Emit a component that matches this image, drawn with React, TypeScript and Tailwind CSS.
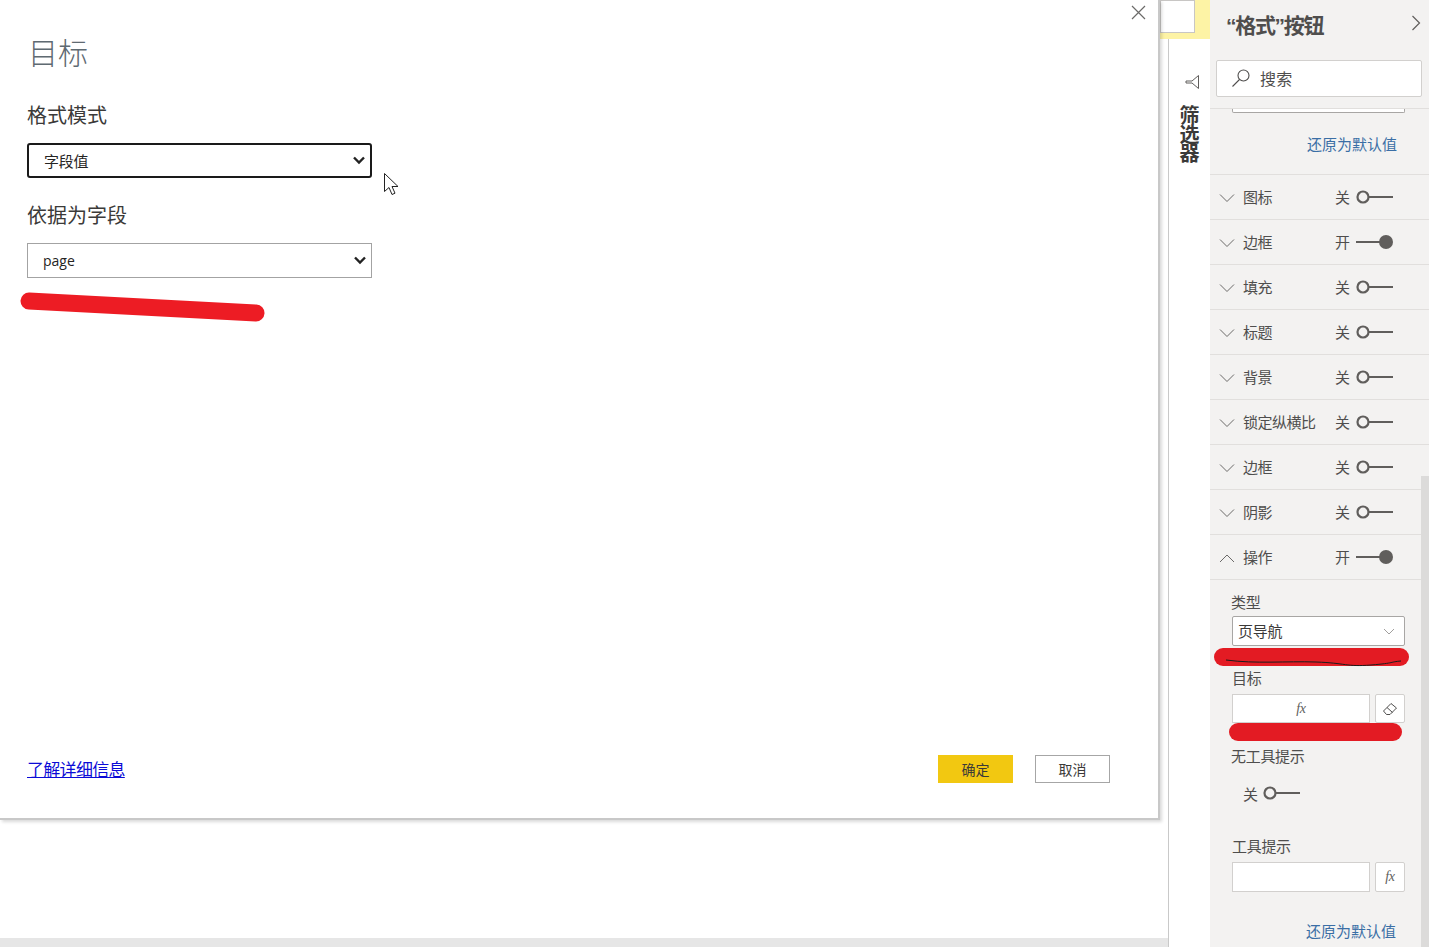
import React from 'react';

const cjk = 'font-["Noto_Sans_CJK_SC","Noto_Sans",sans-serif]';

const Chevron = ({ up = false }: { up?: boolean }) => (
  <svg width="16" height="10" viewBox="0 0 16 10" fill="none" stroke="#6b6a69" strokeWidth="1" className="mt-[1px]">
    <path d={up ? 'M1 9l7-7 7 7' : 'M1 1.5l7 7 7-7'} />
  </svg>
);

const Toggle = ({ on }: { on: boolean }) =>
  on ? (
    <svg width="38" height="16" viewBox="0 0 38 16" fill="none">
      <path d="M0 8h26" stroke="#605e5c" strokeWidth="2" />
      <circle cx="30" cy="8" r="7" fill="#605e5c" />
    </svg>
  ) : (
    <svg width="38" height="16" viewBox="0 0 38 16" fill="none">
      <circle cx="7" cy="8" r="5.5" stroke="#605e5c" strokeWidth="2.2" />
      <path d="M13 8h24" stroke="#605e5c" strokeWidth="2" />
    </svg>
  );

const Row = ({ label, on = false, up = false }: { label: string; on?: boolean; up?: boolean }) => (
  <div className="flex h-[45px] items-center border-b border-[#e1dfdd] pl-[9px]">
    <Chevron up={up} />
    <span className="-mt-[2px] ml-[8px] w-[92px] text-[15px] leading-none tracking-[-0.5px] whitespace-nowrap text-[#4f4e4d]">{label}</span>
    <span className="-mt-[2px] text-[15px] leading-none text-[#4f4e4d]">{on ? '开' : '关'}</span>
    <span className="ml-[6px] flex"><Toggle on={on} /></span>
  </div>
);

const Fx = () => <span className="font-['Liberation_Serif',serif] text-[14px] text-[#605e5c] italic">fx</span>;

const SelectBox = ({ text, focused = false, latin = false }: { text: string; focused?: boolean; latin?: boolean }) => (
  <div
    className={`flex h-[35px] w-[345px] items-center justify-between pr-[4px] pl-[15px] text-[15px] text-[#252423] ${
      focused ? 'rounded-[3px] border-2 border-[#1a1a1a]' : 'border border-[#a3a3a3]'
    }`}
  >
    {latin ? (
      <span className="font-['Open_Sans',sans-serif] text-[14px] leading-none">{text}</span>
    ) : (
      <span className="-mt-[1px] leading-none tracking-[-0.3px]">{text}</span>
    )}
    <svg width="14" height="9" viewBox="0 0 14 9" fill="none" stroke="#222" strokeWidth="2.4">
      <path d="M2 1.5l5 5 5-5" />
    </svg>
  </div>
);

export default function App() {
  return (
    <div className={`flex h-[947px] w-[1429px] overflow-hidden bg-white ${cjk}`}>
      <div className="relative flex w-[1168px] flex-col justify-end">
        <div className="h-[9px] bg-[#e6e6e6]" />

        {/* dialog over the report canvas */}
        <div className="absolute top-0 left-0 flex h-[820px] w-[1160px] flex-col border-r-[2px] border-b-[2px] border-[#c8c8c8] bg-white pl-[27px] shadow-[2px_2px_3px_rgba(0,0,0,0.15)]">
          <svg className="absolute top-[5px] right-[12px]" width="15" height="15" viewBox="0 0 15 15" stroke="#6b6a69" strokeWidth="1.2">
            <path d="M1 1l13 13M14 1L1 14" />
          </svg>
          <h1 className="mt-[30px] ml-[1px] text-[30px] leading-[42px] font-light text-[#5f6a72]">目标</h1>
          <div className="mt-[29px] text-[20px] leading-[28px] text-[#3b3a39]">格式模式</div>
          <div className="mt-[14px]"><SelectBox text="字段值" focused /></div>
          <div className="mt-[23px] text-[20px] leading-[28px] text-[#3b3a39]">依据为字段</div>
          <div className="mt-[14px]">
            <SelectBox text="page" latin />
          </div>
          <svg className="absolute top-[288px] left-[16px]" width="256" height="40" viewBox="0 0 256 40" fill="none">
            <path d="M13 13L240 25" stroke="#ed1c24" strokeWidth="17" strokeLinecap="round" />
          </svg>
          <svg className="absolute top-[172px] left-[383px]" width="18" height="25" viewBox="0 0 18 25" fill="#fff" stroke="#222" strokeWidth="1">
            <path d="M1.5 1.5v18l4.5-4 3 7 3-1.3-3-6.7h6z" />
          </svg>

          <div className="mt-auto mb-[35px] flex items-center pr-[48px]">
            <a className="-mt-[2px] text-[17px] leading-none tracking-[-0.7px] text-[#0b0bd6] underline">了解详细信息</a>
            <div className="ml-auto flex gap-[22px] text-[14px]">
              <button className="h-[28px] w-[75px] bg-[#f2c811] text-[#3b3a39]">确定</button>
              <button className="h-[28px] w-[75px] border border-[#a6a6a6] bg-white text-[#3b3a39]">取消</button>
            </div>
          </div>
        </div>
      </div>

      {/* filters strip */}
      <div className="flex w-[42px] flex-col border-l border-[#c9c9c9]">
        <div className="-ml-[9px] flex h-[39px] items-start bg-[#fdf3a5]">
          <div className="h-[33px] w-[35px] border border-[#c8c6c4] bg-white" />
        </div>
        <div className="mt-[35px] flex flex-col items-center">
          <svg width="16" height="16" viewBox="0 0 16 16" fill="none" stroke="#605e5c" strokeWidth="1" className="ml-[4px]">
            <path d="M14.5 1.5v13L8 9H2V7h6z" />
          </svg>
          <div className="mt-[15px] -ml-[1px] text-[20px] leading-[20px] font-bold tracking-[-1px] text-[#3b3a39] [writing-mode:vertical-rl]">筛选器</div>
        </div>
      </div>

      {/* format pane */}
      <div className="relative flex w-[219px] flex-col bg-[#f3f2f1] text-[#4f4e4d]">
        <div className="absolute top-[476px] right-0 bottom-0 w-[8px] bg-[#dcdbda]" />
        <div className="flex h-[50px] items-center justify-between pr-[8px] pl-[16px]">
          <span className="text-[21px] leading-none font-bold tracking-[-1.3px] text-[#4f4e4d]">
            <span className="font-['Liberation_Sans',sans-serif]">“</span>格式<span className="font-['Liberation_Sans',sans-serif]">”</span>按钮
          </span>
          <svg width="10" height="16" viewBox="0 0 10 16" fill="none" stroke="#605e5c" strokeWidth="1.2" className="-mt-[4px]">
            <path d="M1.5 1l7 7-7 7" />
          </svg>
        </div>
        <div className="mt-[10px] ml-[6px] flex h-[37px] w-[206px] items-center rounded-[2px] border border-[#d2d0ce] bg-white pl-[14px]">
          <svg width="20" height="20" viewBox="0 0 20 20" fill="none" stroke="#4f4e4d" strokeWidth="1.1" className="-mt-[2px]">
            <circle cx="12.5" cy="7.5" r="5.5" />
            <path d="M8.5 11.5L1.5 18.5" />
          </svg>
          <span className="ml-[9px] -mt-[2px] text-[16px] leading-none tracking-[0.2px]">搜索</span>
        </div>
        <div className="mt-[11px] border-t border-[#e1dfdd]">
          <div className="ml-[22px] h-[4px] w-[173px] rounded-b-[2px] border-x border-b border-[#a8a6a4] bg-white" />
        </div>
        <div className="flex h-[62px] items-start justify-end border-b border-[#e1dfdd] pt-[21px] pr-[32px]">
          <span className="text-[15px] leading-[20px] text-[#3a6ea5]">还原为默认值</span>
        </div>
        <Row label="图标" />
        <Row label="边框" on />
        <Row label="填充" />
        <Row label="标题" />
        <Row label="背景" />
        <Row label="锁定纵横比" />
        <Row label="边框" />
        <Row label="阴影" />
        <Row label="操作" on up />

        <div className="relative pl-[22px] text-[15px] leading-none tracking-[-0.3px]">
          <div className="mt-[14px] -ml-[1px]">类型</div>
          <div className="mt-[7px] flex h-[30px] w-[173px] items-center justify-between rounded-[2px] border border-[#a8a6a4] bg-white pr-[9px] pl-[5px] text-[#3b3a39]">
            <span className="-mt-[1px]">页导航</span>
            <svg width="12" height="7" viewBox="0 0 12 7" fill="none" stroke="#a19f9d"><path d="M1 1l5 5 5-5" /></svg>
          </div>
          <div className="mt-[24px]">目标</div>
          <div className="mt-[9px] flex gap-[5px]">
            <div className="flex h-[29px] w-[138px] items-center justify-center border border-[#d2d0ce] bg-white"><Fx /></div>
            <div className="flex h-[29px] w-[30px] items-center justify-center rounded-[2px] border border-[#d2d0ce] bg-white">
              <svg width="16" height="14" viewBox="0 0 16 14" fill="none" stroke="#4f4e4d" strokeWidth="1">
                <path d="M1.5 9L9 1.5l5.5 4.5-6.5 6.5H4.5zM5 5.5l5.5 5" />
              </svg>
            </div>
          </div>
          <div className="mt-[25px] -ml-[1px]">无工具提示</div>
          <div className="mt-[22px] ml-[11px] flex items-center gap-[5px]">
            <span className="text-[15px]">关</span>
            <Toggle on={false} />
          </div>
          <div className="mt-[37px]">工具提示</div>
          <div className="mt-[9px] flex gap-[5px]">
            <div className="h-[30px] w-[138px] border border-[#d2d0ce] bg-white" />
            <div className="flex h-[30px] w-[30px] items-center justify-center rounded-[2px] border border-[#d2d0ce] bg-white"><Fx /></div>
          </div>
          <div className="mt-[31px] ml-[74px] text-[15px] tracking-normal whitespace-nowrap text-[#3a6ea5]">还原为默认值</div>

          <svg className="absolute top-[67px] -left-[2px] overflow-visible" width="200" height="24" viewBox="0 0 200 24" fill="none">
            <path d="M15 10H192" stroke="#e31b23" strokeWidth="18" strokeLinecap="round" />
            <path d="M18 13c30 4 60 1 90 2s30 5 55 3 18-3 30-4" stroke="#1a1a1a" strokeWidth="1" />
          </svg>
          <svg className="absolute top-[142px] left-[19px] overflow-visible" width="170" height="20" viewBox="0 0 170 20" fill="none">
            <path d="M9 10H164" stroke="#e31b23" strokeWidth="18" strokeLinecap="round" />
          </svg>
        </div>
      </div>
    </div>
  );
}
